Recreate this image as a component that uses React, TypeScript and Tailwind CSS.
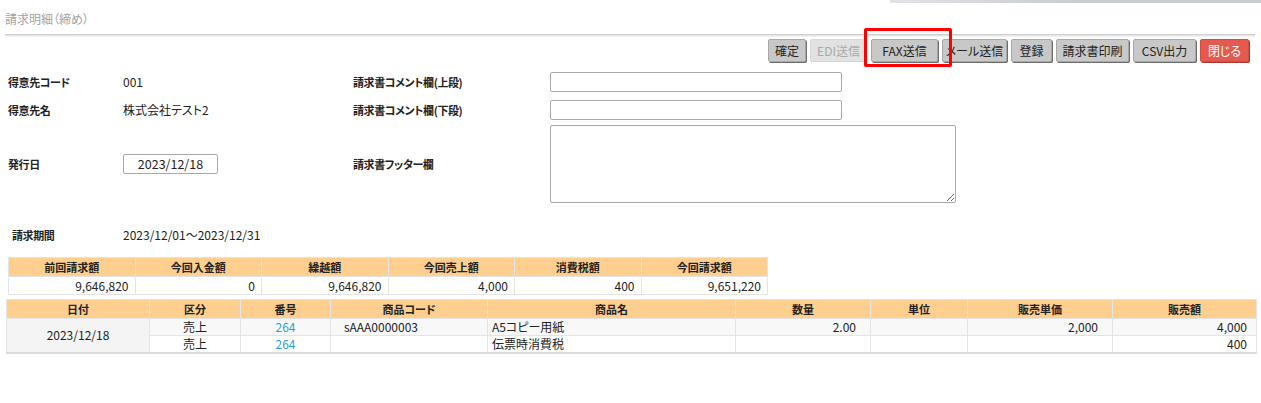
import React from 'react'

const FONT = "font-['Noto_Sans_CJK_JP','Noto_Sans',sans-serif] [font-feature-settings:'palt']"

type Btn = { label: string; tone?: 'normal' | 'disabled' | 'danger'; w: number }

const BUTTONS: Btn[] = [
  { label: '確定', w: 38 },
  { label: 'EDI送信', tone: 'disabled', w: 57 },
  { label: 'FAX送信', w: 67 },
  { label: 'メール送信', w: 65 },
  { label: '登録', w: 41 },
  { label: '請求書印刷', w: 73 },
  { label: 'CSV出力', w: 63 },
  { label: '閉じる', tone: 'danger', w: 49 },
]

const SUMMARY = [
  { head: '前回請求額', value: '9,646,820' },
  { head: '今回入金額', value: '0' },
  { head: '繰越額', value: '9,646,820' },
  { head: '今回売上額', value: '4,000' },
  { head: '消費税額', value: '400' },
  { head: '今回請求額', value: '9,651,220' },
]

const DETAIL_COLS = [
  { head: '日付', w: 143 },
  { head: '区分', w: 91 },
  { head: '番号', w: 90 },
  { head: '商品コード', w: 157 },
  { head: '商品名', w: 248 },
  { head: '数量', w: 135 },
  { head: '単位', w: 97 },
  { head: '販売単価', w: 145 },
  { head: '販売額', w: 144 },
]

const LABEL = 'font-bold text-[11px] tracking-[-0.4px]'
const CELL = 'border border-[#e4e4e4] py-0 leading-none'

function ActionButton({ b }: { b: Btn }) {
  const tone =
    b.tone === 'disabled'
      ? 'bg-[#e2e2e2] text-[#a9a9a9] border-[#d6d6d6] shadow-none'
      : b.tone === 'danger'
        ? 'bg-[#e35a4f] text-white border-[#d24c42] shadow-[1px_1px_0_#b03a31]'
        : 'bg-[#c8c8c8] text-[#222] border-[#a8a8a8] shadow-[1px_1px_0_#6e6e6e]'
  return (
    <button
      className={`h-[23px] rounded-[2px] border text-[12px] leading-none flex items-center justify-center ${tone}`}
      style={{ width: b.w }}
    >
      {b.label}
    </button>
  )
}

export default function App() {
  return (
    <div className={`relative w-[1261px] h-[403px] bg-white text-[#222] text-[12px] ${FONT}`}>
      <div className="flex justify-end h-[3px]">
        <div className="w-[371px] h-[3px] bg-gradient-to-r from-[#e2e4e7] via-[#c8cbd0] to-[#c8cbd0]" />
      </div>

      <div className="pl-[5px] pt-[7px] h-[31px] text-[#a3a3a3] text-[12px]">請求明細（締め）</div>
      <div className="ml-[5px] mr-[6px] h-[3px] border-t border-[#cfcfcf] bg-[#e6e6e6] border-b border-b-[#f2f2f2]" />

      <div className="flex justify-end gap-[4px] pr-[12px] mt-[2px]">
        {BUTTONS.map(b => (
          <ActionButton key={b.label} b={b} />
        ))}
      </div>

      {/* highlight frame around the FAX button */}
      <div className="absolute left-[864px] top-[28px] w-[88px] h-[39px] border-[3px] border-[#ff0000] rounded-[2px]" />

      <div className="mt-[10px] flex flex-col">
        <div className="flex items-center h-[20px]">
          <div className={`w-[123px] pl-[8px] ${LABEL}`}>得意先コード</div>
          <div className="w-[230px]">001</div>
          <div className={`w-[197px] ${LABEL}`}>請求書コメント欄(上段)</div>
          <input className="w-[292px] h-[20px] border border-[#a9a9a9] rounded-[2px]" />
        </div>
        <div className="flex items-center h-[20px] mt-[8px]">
          <div className={`w-[123px] pl-[8px] ${LABEL}`}>得意先名</div>
          <div className="w-[230px]">株式会社テスト2</div>
          <div className={`w-[197px] ${LABEL}`}>請求書コメント欄(下段)</div>
          <input className="w-[292px] h-[20px] border border-[#a9a9a9] rounded-[2px]" />
        </div>
        <div className="flex items-center h-[78px] mt-[5px]">
          <div className={`w-[123px] pl-[8px] ${LABEL}`}>発行日</div>
          <div className="w-[230px]">
            <div className="w-[95px] h-[20px] border border-[#a9a9a9] rounded-[2px] flex items-center justify-center text-[12.5px]">
              2023/12/18
            </div>
          </div>
          <div className={`w-[197px] ${LABEL}`}>請求書フッター欄</div>
          <textarea className="w-[406px] h-[78px] border border-[#a9a9a9] rounded-[2px] resize" />
        </div>
      </div>

      <div className="flex items-center h-[20px] mt-[22px]">
        <div className={`w-[123px] pl-[12px] ${LABEL}`}>請求期間</div>
        <div>2023/12/01～2023/12/31</div>
      </div>

      <table className="ml-[8px] mt-[12px] border-collapse table-fixed w-[760px]">
        <thead>
          <tr className="h-[19px]">
            {SUMMARY.map(s => (
              <th key={s.head} className={`bg-[#fecf8e] text-center px-0 text-[11px] font-bold ${CELL}`}>
                {s.head}
              </th>
            ))}
          </tr>
        </thead>
        <tbody>
          <tr className="h-[18px]">
            {SUMMARY.map(s => (
              <td key={s.head} className={`text-right pr-[6px] ${CELL}`}>
                {s.value}
              </td>
            ))}
          </tr>
        </tbody>
      </table>

      <table className="ml-[6px] mt-[4px] border-collapse table-fixed w-[1250px]">
        <colgroup>
          {DETAIL_COLS.map(c => (
            <col key={c.head} style={{ width: c.w }} />
          ))}
        </colgroup>
        <thead>
          <tr className="h-[19px]">
            {DETAIL_COLS.map(c => (
              <th key={c.head} className={`bg-[#fecf8e] text-center px-0 text-[11px] font-bold ${CELL}`}>
                {c.head}
              </th>
            ))}
          </tr>
        </thead>
        <tbody className="border-b-2 border-[#dcdcdc]">
          <tr className="h-[17px] bg-[#f8f8f8]">
            <td rowSpan={2} className={`bg-[#f4f4f4] text-center ${CELL}`}>
              2023/12/18
            </td>
            <td className={`text-center ${CELL}`}>売上</td>
            <td className={`text-center text-[#2a9fd0] ${CELL}`}>264</td>
            <td className={`pl-[13px] ${CELL}`}>sAAA0000003</td>
            <td className={`pl-[4px] ${CELL}`}>A5コピー用紙</td>
            <td className={`text-right pr-[14px] ${CELL}`}>2.00</td>
            <td className={CELL} />
            <td className={`text-right pr-[14px] ${CELL}`}>2,000</td>
            <td className={`text-right pr-[9px] ${CELL}`}>4,000</td>
          </tr>
          <tr className="h-[17px] bg-white">
            <td className={`text-center ${CELL}`}>売上</td>
            <td className={`text-center text-[#2a9fd0] ${CELL}`}>264</td>
            <td className={CELL} />
            <td className={`pl-[4px] ${CELL}`}>伝票時消費税</td>
            <td className={CELL} />
            <td className={CELL} />
            <td className={CELL} />
            <td className={`text-right pr-[9px] ${CELL}`}>400</td>
          </tr>
        </tbody>
      </table>
    </div>
  )
}
